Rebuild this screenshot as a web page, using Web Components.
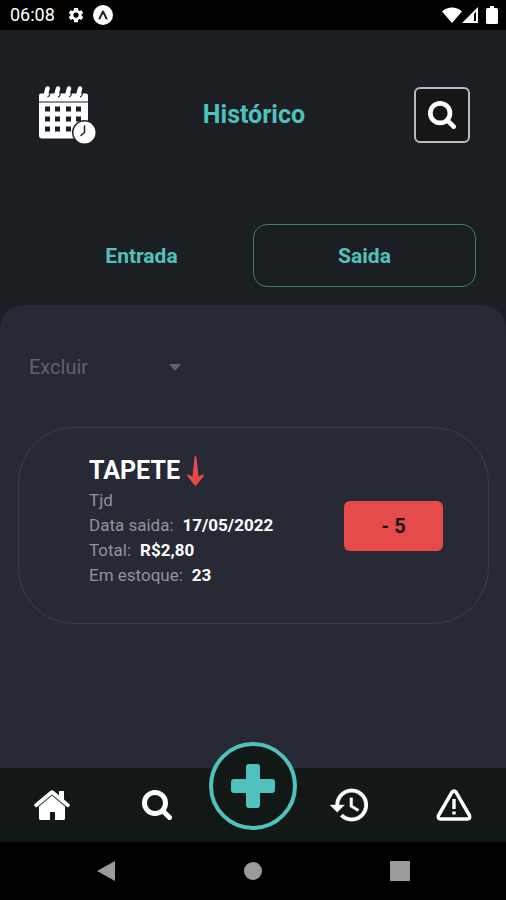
<!DOCTYPE html>
<html lang="pt-BR">
<head>
<meta charset="utf-8">
<meta name="viewport" content="width=device-width, initial-scale=1">
<title>Histórico</title>
<style>
  :root {
    --bg:     #1b1e23;
    --panel:  #272935;
    --bar:    #111816;
    --teal:   #50c2bd;
    --line:   #3f7f78;
    --faint:  #2b4549;
    --muted:  #92949e;
    --subtle: #5f6178;
    --red:    #e64b4c;
  }
  body { margin: 0; background: #000; }
</style>
</head>
<body>
<history-app></history-app>

<script>
// ── ICONS ───
const ICONS = {
  gear: ['0 0 24 24', '<path fill="currentColor" fill-rule="evenodd" d="M19.4 13a7.5 7.5 0 0 0 0-2l2.2-1.7-2.2-3.8-2.7 1.1a7.5 7.5 0 0 0-1.7-1L14.6 2.5H9.4L9 5.600a7.5 7.5 0 0 0-1.7 1L4.6 5.5 2.4 9.3 4.6 11a7.5 7.5 0 0 0 0 2l-2.2 1.7 2.2 3.8 2.7-1.1a7.5 7.5 0 0 0 1.7 1l.4 3.1h5.2l.4-3.1a7.5 7.5 0 0 0 1.7-1l2.7 1.1 2.2-3.8zM12 15.5a3.5 3.5 0 1 1 0-7 3.5 3.5 0 0 1 0 7z"/>'],
  expo: ['0 0 20 20', '<circle cx="10" cy="10" r="10" fill="currentColor"/><path d="M6.5 13.5 10 6.5 13.5 13.5" fill="none" stroke="#222" stroke-width="2" stroke-linecap="round" stroke-linejoin="round"/>'],
  wifi: ['0 0 20 16', '<path fill="currentColor" d="M0 4.5C5.5-1 14.5-1 20 4.5L10 16z"/>'],
  signal: ['0 0 16 16', '<path fill="currentColor" fill-rule="evenodd" d="M16 0v16H0zM12 7v7h2V4.5z"/>'],
  battery: ['0 0 12 18', '<path fill="currentColor" d="M4 0h4v2h2.5A1.5 1.5 0 0 1 12 3.5v13a1.5 1.5 0 0 1-1.5 1.5h-9A1.5 1.5 0 0 1 0 16.5v-13A1.5 1.5 0 0 1 1.5 2H4z"/>'],
  calendar: ['0 0 58 57', `
    <path fill="currentColor" d="M1 15V9q0-2 2-2h45q2 0 2 2v6z"/>
    <path d="M9.500 2 7.500 9.500M20 2l-2 7.500M31 2l-2 7.500M42 2l-2 7.500" stroke="currentColor" stroke-width="4.500" stroke-linecap="round"/>
    <path d="M9.500 10.500q2-.5 2.500-3.500M20 10.500q2-.5 2.500-3.500M31 10.500q2-.5 2.500-3.500M42 10.500q2-.5 2.500-3.500" fill="none" stroke="#1b1e23" stroke-width="1.300"/>
    <path fill="currentColor" d="M1 16h49v33q0 3-3 3H4q-3 0-3-3z"/>
    <path fill="#1b1e23" d="M7 20h5v5H7zM17 20h5v5h-5zM28 20h5v5h-5zM38 20h5v5h-5zM7 30h5v5H7zM17 30h5v5h-5zM28 30h5v5h-5zM38 30h5v5h-5zM7 40h5v5H7zM17 40h5v5h-5zM28 40h5v5h-5z"/>
    <circle cx="46.500" cy="46" r="12.500" fill="#1b1e23"/><circle cx="46.500" cy="46" r="11" fill="currentColor"/>
    <path d="M46.500 39.500V46l-3.500 3" fill="none" stroke="#1b1e23" stroke-width="1.500" stroke-linecap="round"/>`],
  search: ['0 0 30 30', '<g fill="none" stroke="currentColor" stroke-width="5" stroke-linecap="round"><circle cx="13" cy="13" r="10.500"/><path d="m21 21 6.500 6.500"/></g>'],
  down: ['0 0 12 7', '<path fill="currentColor" d="M0 0h12L6 7z"/>'],
  fall: ['0 0 17 30', '<path fill="currentColor" d="M7.500 1q1-2 2 0L11.500 20.500l4.500-2q1.500 0 .8 1.500L9.500 29q-1 1.500-2 0L.2 20Q-.5 18.500 1 18.500l4.500 2z"/>'],
  home: ['0 0 36 30', '<path fill="currentColor" d="M16.500.8q1.500-1.200 3 0L25 5.300V1h5v8.500l5.400 4.600q.8.8.2 1.600l-1 1.200q-.8.8-1.600.1L18 4.400 3 17q-.8.7-1.600-.1l-1-1.200q-.6-.8.2-1.600z"/><path fill="currentColor" d="m18 5.400 13 11v12.100q0 1.500-1.500 1.500H21v-8h-5v8H6.500Q5 30 5 28.500V16.400z"/>'],
  history: ['1 3 21 18', '<path fill="currentColor" stroke="currentColor" stroke-width=".2" d="M13 3a9 9 0 0 0-9 9H1l3.890 3.890.070.140L9 12H6c0-3.870 3.130-7 7-7s7 3.130 7 7-3.130 7-7 7c-1.930 0-3.680-.790-4.940-2.060l-1.420 1.420A8.950 8.950 0 0 0 13 21a9 9 0 0 0 0-18zm-1 5v5l4.280 2.540.720-1.210-3.500-2.080V8z"/>'],
  alert: ['0 0 36 32', '<path d="M16 3.200q2-2.400 4 0L33.500 26.500q1 3.500-2 3.500h-27q-3 0-2-3.500z" fill="none" stroke="currentColor" stroke-width="3.500" stroke-linejoin="round"/><path fill="currentColor" d="M16.300 10h3.400v10h-3.400zM16.300 22.500h3.400v3h-3.400z"/>'],
  plus: ['0 0 44 44', '<path fill="currentColor" d="M18 0h8q3 0 3 3v12h12q3 0 3 3v8q0 3-3 3H29v12q0 3-3 3h-8q-3 0-3-3V29H3q-3 0-3-3v-8q0-3 3-3h12V3q0-3 3-3z"/>'],
  back: ['0 0 18 20', '<path fill="currentColor" d="M18 0v20L0 10z"/>'],
  circle: ['0 0 20 20', '<circle cx="10" cy="10" r="9" fill="currentColor"/>'],
  square: ['0 0 20 20', '<rect width="20" height="20" rx="1" fill="currentColor"/>'],
};

// shared by every element below
class BaseElement extends HTMLElement {
  connectedCallback() {
    if (this.shadowRoot) return;
    this.attachShadow({ mode: 'open' }).innerHTML = `
      <style>
        :host, *, *::before, *::after { box-sizing: border-box; }
        h1, h2, p, dl, dd { margin: 0; }
        button, select { margin: 0; padding: 0; }
        button { background: none; border: 0; color: inherit; font: inherit; cursor: pointer; }
      </style>
      ${this.render()}`;
  }
}

class UiIcon extends BaseElement {
  render() {
    const [box, body] = ICONS[this.getAttribute('name')];
    return `
      <style>
        :host { display: block; flex: none; width: 30px; height: 30px; }
        svg { display: block; width: 100%; height: 100%; }
      </style>
      <svg viewBox="${box}" aria-hidden="true">${body}</svg>`;
  }
}

class StatusBar extends BaseElement {
  render() {
    return `
      <style>
        :host {
          display: flex; align-items: center; justify-content: space-between;
          height: 30px; padding: 0 8px 0 10px; background: #000; color: #fff;
          font-size: 18px; line-height: 24px;
        }
        .group { display: flex; align-items: center; }
        .left { gap: 12px; }
        .gear { width: 18px; height: 18px; }
        .expo { width: 20px; height: 20px; margin-left: -4px; }
        .wifi { width: 20px; height: 16px; }
        .signal { width: 16px; height: 16px; }
        .battery { width: 12px; height: 18px; margin-left: 8px; }
      </style>
      <div class="group left">
        <time>06:08</time>
        <ui-icon class="gear" name="gear"></ui-icon>
        <ui-icon class="expo" name="expo"></ui-icon>
      </div>
      <div class="group">
        <ui-icon class="wifi" name="wifi"></ui-icon>
        <ui-icon class="signal" name="signal"></ui-icon>
        <ui-icon class="battery" name="battery"></ui-icon>
      </div>`;
  }
}

class PageHeader extends BaseElement {
  render() {
    return `
      <style>
        :host {
          display: grid; grid-template-columns: 1fr auto 1fr; align-items: center;
          padding: 56px 36px 80px 38px;
        }
        .calendar { width: 58px; height: 58px; color: #fff; }
        h1 { font-size: 25px; line-height: 34px; font-weight: 700; color: var(--teal); }
        button {
          justify-self: end; display: grid; place-items: center;
          width: 56px; height: 56px; border: 2px solid #b9babb; border-radius: 6px;
          background: #151615; color: #fff;
        }
        button ui-icon { width: 28px; height: 28px; }
      </style>
      <ui-icon class="calendar" name="calendar"></ui-icon>
      <h1><slot></slot></h1>
      <button type="button" aria-label="Pesquisar"><ui-icon name="search"></ui-icon></button>`;
  }
}

class TypeTabs extends BaseElement {
  render() {
    return `
      <style>
        :host { display: grid; grid-template-columns: 1fr 1fr; padding: 0 30px 18px; }
        button {
          height: 63px; border: 1px solid transparent; border-radius: 14px;
          color: var(--teal); font-size: 21px; line-height: 28px; font-weight: 700;
        }
        button[aria-pressed="true"] { border-color: var(--line); }
      </style>
      <button type="button" aria-pressed="false">Entrada</button>
      <button type="button" aria-pressed="true">Saida</button>`;
  }
  connectedCallback() {
    super.connectedCallback();
    const btns = this.shadowRoot.querySelectorAll('button');
    btns.forEach(b => b.addEventListener('click', () => {
      btns.forEach(o => o.setAttribute('aria-pressed', String(o === b)));
    }));
  }
}

class DeleteSelect extends BaseElement {
  render() {
    return `
      <style>
        :host { display: grid; width: 152px; align-items: center; color: var(--subtle); }
        select, ui-icon { grid-area: 1 / 1; }
        select {
          width: 100%; height: 48px; appearance: none; border: 0; background: transparent;
          color: inherit; font: inherit; font-size: 20px; line-height: 28px;
        }
        ui-icon { justify-self: end; width: 12px; height: 7px; pointer-events: none; }
      </style>
      <select aria-label="Excluir"><option>Excluir</option></select>
      <ui-icon name="down"></ui-icon>`;
  }
}

class ProductCard extends BaseElement {
  render() {
    return `
      <style>
        :host {
          display: flex; align-items: center; justify-content: space-between; gap: 16px;
          padding: 0 45px 0 70px; border: 1px solid var(--faint); border-radius: 56px;
          color: var(--muted); font-size: 17px; line-height: 25px;
        }
        .info { padding: 26px 0 35px; }
        .title { display: flex; align-items: center; gap: 7px; }
        h2 { color: #fff; font-size: 25px; line-height: 34px; font-weight: 700; }
        .fall { width: 17px; height: 30px; color: var(--red); }
        dl div { display: flex; gap: 9px; }
        dd { color: #fff; font-weight: 700; }
        .qty {
          min-width: 99px; height: 50px; border-radius: 6px; background: var(--red);
          color: #1c1012; font-size: 20px; line-height: 28px; font-weight: 700;
        }
      </style>
      <div class="info">
        <div class="title"><h2><slot name="title"></slot></h2><ui-icon class="fall" name="fall"></ui-icon></div>
        <p><slot name="note"></slot></p>
        <dl>
          <div><dt>Data saida:</dt><dd><slot name="date"></slot></dd></div>
          <div><dt>Total:</dt><dd><slot name="total"></slot></dd></div>
          <div><dt>Em estoque:</dt><dd><slot name="stock"></slot></dd></div>
        </dl>
      </div>
      <button class="qty" type="button"><slot name="qty"></slot></button>`;
  }
}

class TabBar extends BaseElement {
  render() {
    return `
      <style>
        :host { display: block; background: var(--bar); color: #fff; }
        nav { display: grid; grid-template-columns: 1fr 1fr 88px 1fr 1fr; height: 74px; }
        button { display: grid; place-items: center; }
        .home { width: 36px; height: 30px; }
        .history { width: 38px; height: 34px; }
        .alert { width: 36px; height: 32px; }
        /* sticks out over the panel */
        .add {
          height: 88px; margin-top: -26px; border: 4px solid var(--teal); border-radius: 50%;
          background: var(--bar); color: var(--teal);
        }
        .add ui-icon { width: 44px; height: 44px; }
      </style>
      <nav>
        <button type="button" aria-label="Início"><ui-icon class="home" name="home"></ui-icon></button>
        <button type="button" aria-label="Pesquisar"><ui-icon name="search"></ui-icon></button>
        <button type="button" aria-label="Adicionar" class="add"><ui-icon name="plus"></ui-icon></button>
        <button type="button" aria-label="Histórico"><ui-icon class="history" name="history"></ui-icon></button>
        <button type="button" aria-label="Alertas"><ui-icon class="alert" name="alert"></ui-icon></button>
      </nav>`;
  }
}

class SystemNav extends BaseElement {
  render() {
    return `
      <style>
        :host {
          display: grid; grid-template-columns: repeat(3, 1fr); height: 58px;
          padding: 0 33px; background: #000; color: #9b9b9b;
        }
        button { display: grid; place-items: center; }
        ui-icon { width: 20px; height: 20px; }
      </style>
      <button type="button" aria-label="Voltar"><ui-icon name="back"></ui-icon></button>
      <button type="button" aria-label="Tela inicial"><ui-icon name="circle"></ui-icon></button>
      <button type="button" aria-label="Recentes"><ui-icon name="square"></ui-icon></button>`;
  }
}

class HistoryApp extends BaseElement {
  render() {
    return `
      <style>
        :host {
          display: flex; flex-direction: column; min-height: 100vh;
          background: var(--bg); font-family: Roboto, "Liberation Sans", sans-serif;
        }
        main {
          flex: 1; padding: 38px 17px 48px 18px;
          border-radius: 24px 24px 0 0; background: var(--panel);
        }
        delete-select { margin: 0 0 36px 11px; }
      </style>
      <status-bar></status-bar>
      <page-header>Histórico</page-header>
      <type-tabs></type-tabs>
      <main>
        <delete-select></delete-select>
        <product-card>
          <span slot="title">TAPETE</span>
          <span slot="note">Tjd</span>
          <span slot="date">17/05/2022</span>
          <span slot="total">R$2,80</span>
          <span slot="stock">23</span>
          <span slot="qty">- 5</span>
        </product-card>
      </main>
      <tab-bar></tab-bar>
      <system-nav></system-nav>`;
  }
}

customElements.define('ui-icon', UiIcon);
customElements.define('status-bar', StatusBar);
customElements.define('page-header', PageHeader);
customElements.define('type-tabs', TypeTabs);
customElements.define('delete-select', DeleteSelect);
customElements.define('product-card', ProductCard);
customElements.define('tab-bar', TabBar);
customElements.define('system-nav', SystemNav);
customElements.define('history-app', HistoryApp);
</script>
</body>
</html>
